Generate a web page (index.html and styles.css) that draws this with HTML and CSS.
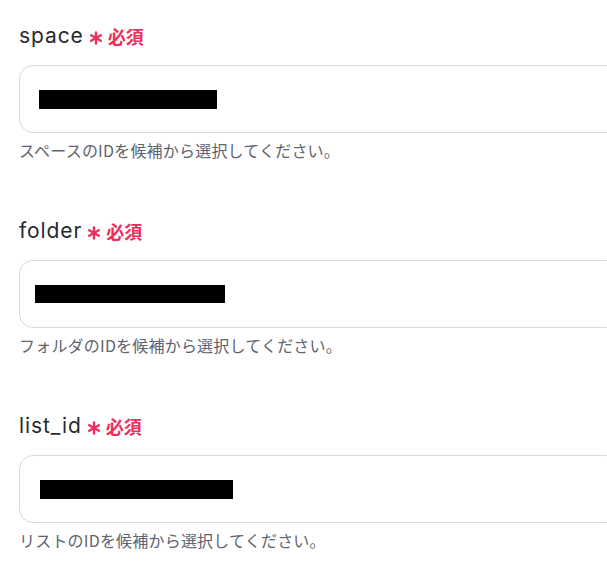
FILE: index.html
```html
<!DOCTYPE html>
<html lang="ja">
<head>
<meta charset="utf-8">
<link rel="stylesheet" href="styles.css">
</head>
<body>
<div class="form">
  <div class="field">
    <div class="label"><span class="name">space</span><svg class="ast" viewBox="0 0 14 14"><g stroke="currentColor" stroke-width="2.4" stroke-linecap="round"><line x1="7" y1="1.5" x2="7" y2="12.5"/><line x1="2.2" y1="4.2" x2="11.8" y2="9.8"/><line x1="2.2" y1="9.8" x2="11.8" y2="4.2"/></g></svg><span class="req">必須</span></div>
    <div class="box"><span class="mask w1"></span></div>
    <div class="help">スペースのIDを候補から選択してください。</div>
  </div>
  <div class="field">
    <div class="label"><span class="name">folder</span><svg class="ast" viewBox="0 0 14 14"><g stroke="currentColor" stroke-width="2.4" stroke-linecap="round"><line x1="7" y1="1.5" x2="7" y2="12.5"/><line x1="2.2" y1="4.2" x2="11.8" y2="9.8"/><line x1="2.2" y1="9.8" x2="11.8" y2="4.2"/></g></svg><span class="req">必須</span></div>
    <div class="box b2"><span class="mask w2"></span></div>
    <div class="help">フォルダのIDを候補から選択してください。</div>
  </div>
  <div class="field">
    <div class="label"><span class="name">list_id</span><svg class="ast" viewBox="0 0 14 14"><g stroke="currentColor" stroke-width="2.4" stroke-linecap="round"><line x1="7" y1="1.5" x2="7" y2="12.5"/><line x1="2.2" y1="4.2" x2="11.8" y2="9.8"/><line x1="2.2" y1="9.8" x2="11.8" y2="4.2"/></g></svg><span class="req">必須</span></div>
    <div class="box b3"><span class="mask w3"></span></div>
    <div class="help">リストのIDを候補から選択してください。</div>
  </div>
</div>
</body>
</html>
```
FILE: styles.css
```css
html, body {
  margin: 0;
  padding: 0;
  background: #ffffff;
  overflow: hidden;
}
body {
  font-family: Inter, "Noto Sans CJK JP", sans-serif;
}
.form {
  display: flex;
  flex-direction: column;
  gap: 57px;
  padding: 22px 0 0 19px;
  width: 600px;
}
.field {
  display: flex;
  flex-direction: column;
}
.label {
  display: flex;
  align-items: center;
  height: 28px;
  color: #262a31;
}
.name {
  font-size: 21px;
  line-height: 28px;
  letter-spacing: 0.9px;
}
.ast {
  width: 14px;
  height: 14px;
  color: #ec2f5c;
  margin: 3px 5px 0 5px;
}
.req {
  font-family: "Noto Sans CJK JP", sans-serif;
  font-size: 18px;
  font-weight: 700;
  color: #ec2f5c;
  line-height: 28px;
}
.box {
  margin-top: 15px;
  border: 1px solid #d6d9df;
  border-radius: 14px;
  display: flex;
  align-items: center;
  padding-left: 19px;
  box-sizing: border-box;
  height: 68px;
}
.mask {
  display: block;
  background: #000;
  height: 19px;
}
.w1 { width: 178px; margin-left: 0; }
.w2 { width: 190px; margin-left: -4px; height: 18px; }
.w3 { width: 193px; margin-left: 1px; }
.help {
  margin-top: 7px;
  font-family: "Noto Sans CJK JP", sans-serif;
  font-size: 16px;
  line-height: 20px;
  letter-spacing: 0.2px;
  color: #5e6470;
}
```
